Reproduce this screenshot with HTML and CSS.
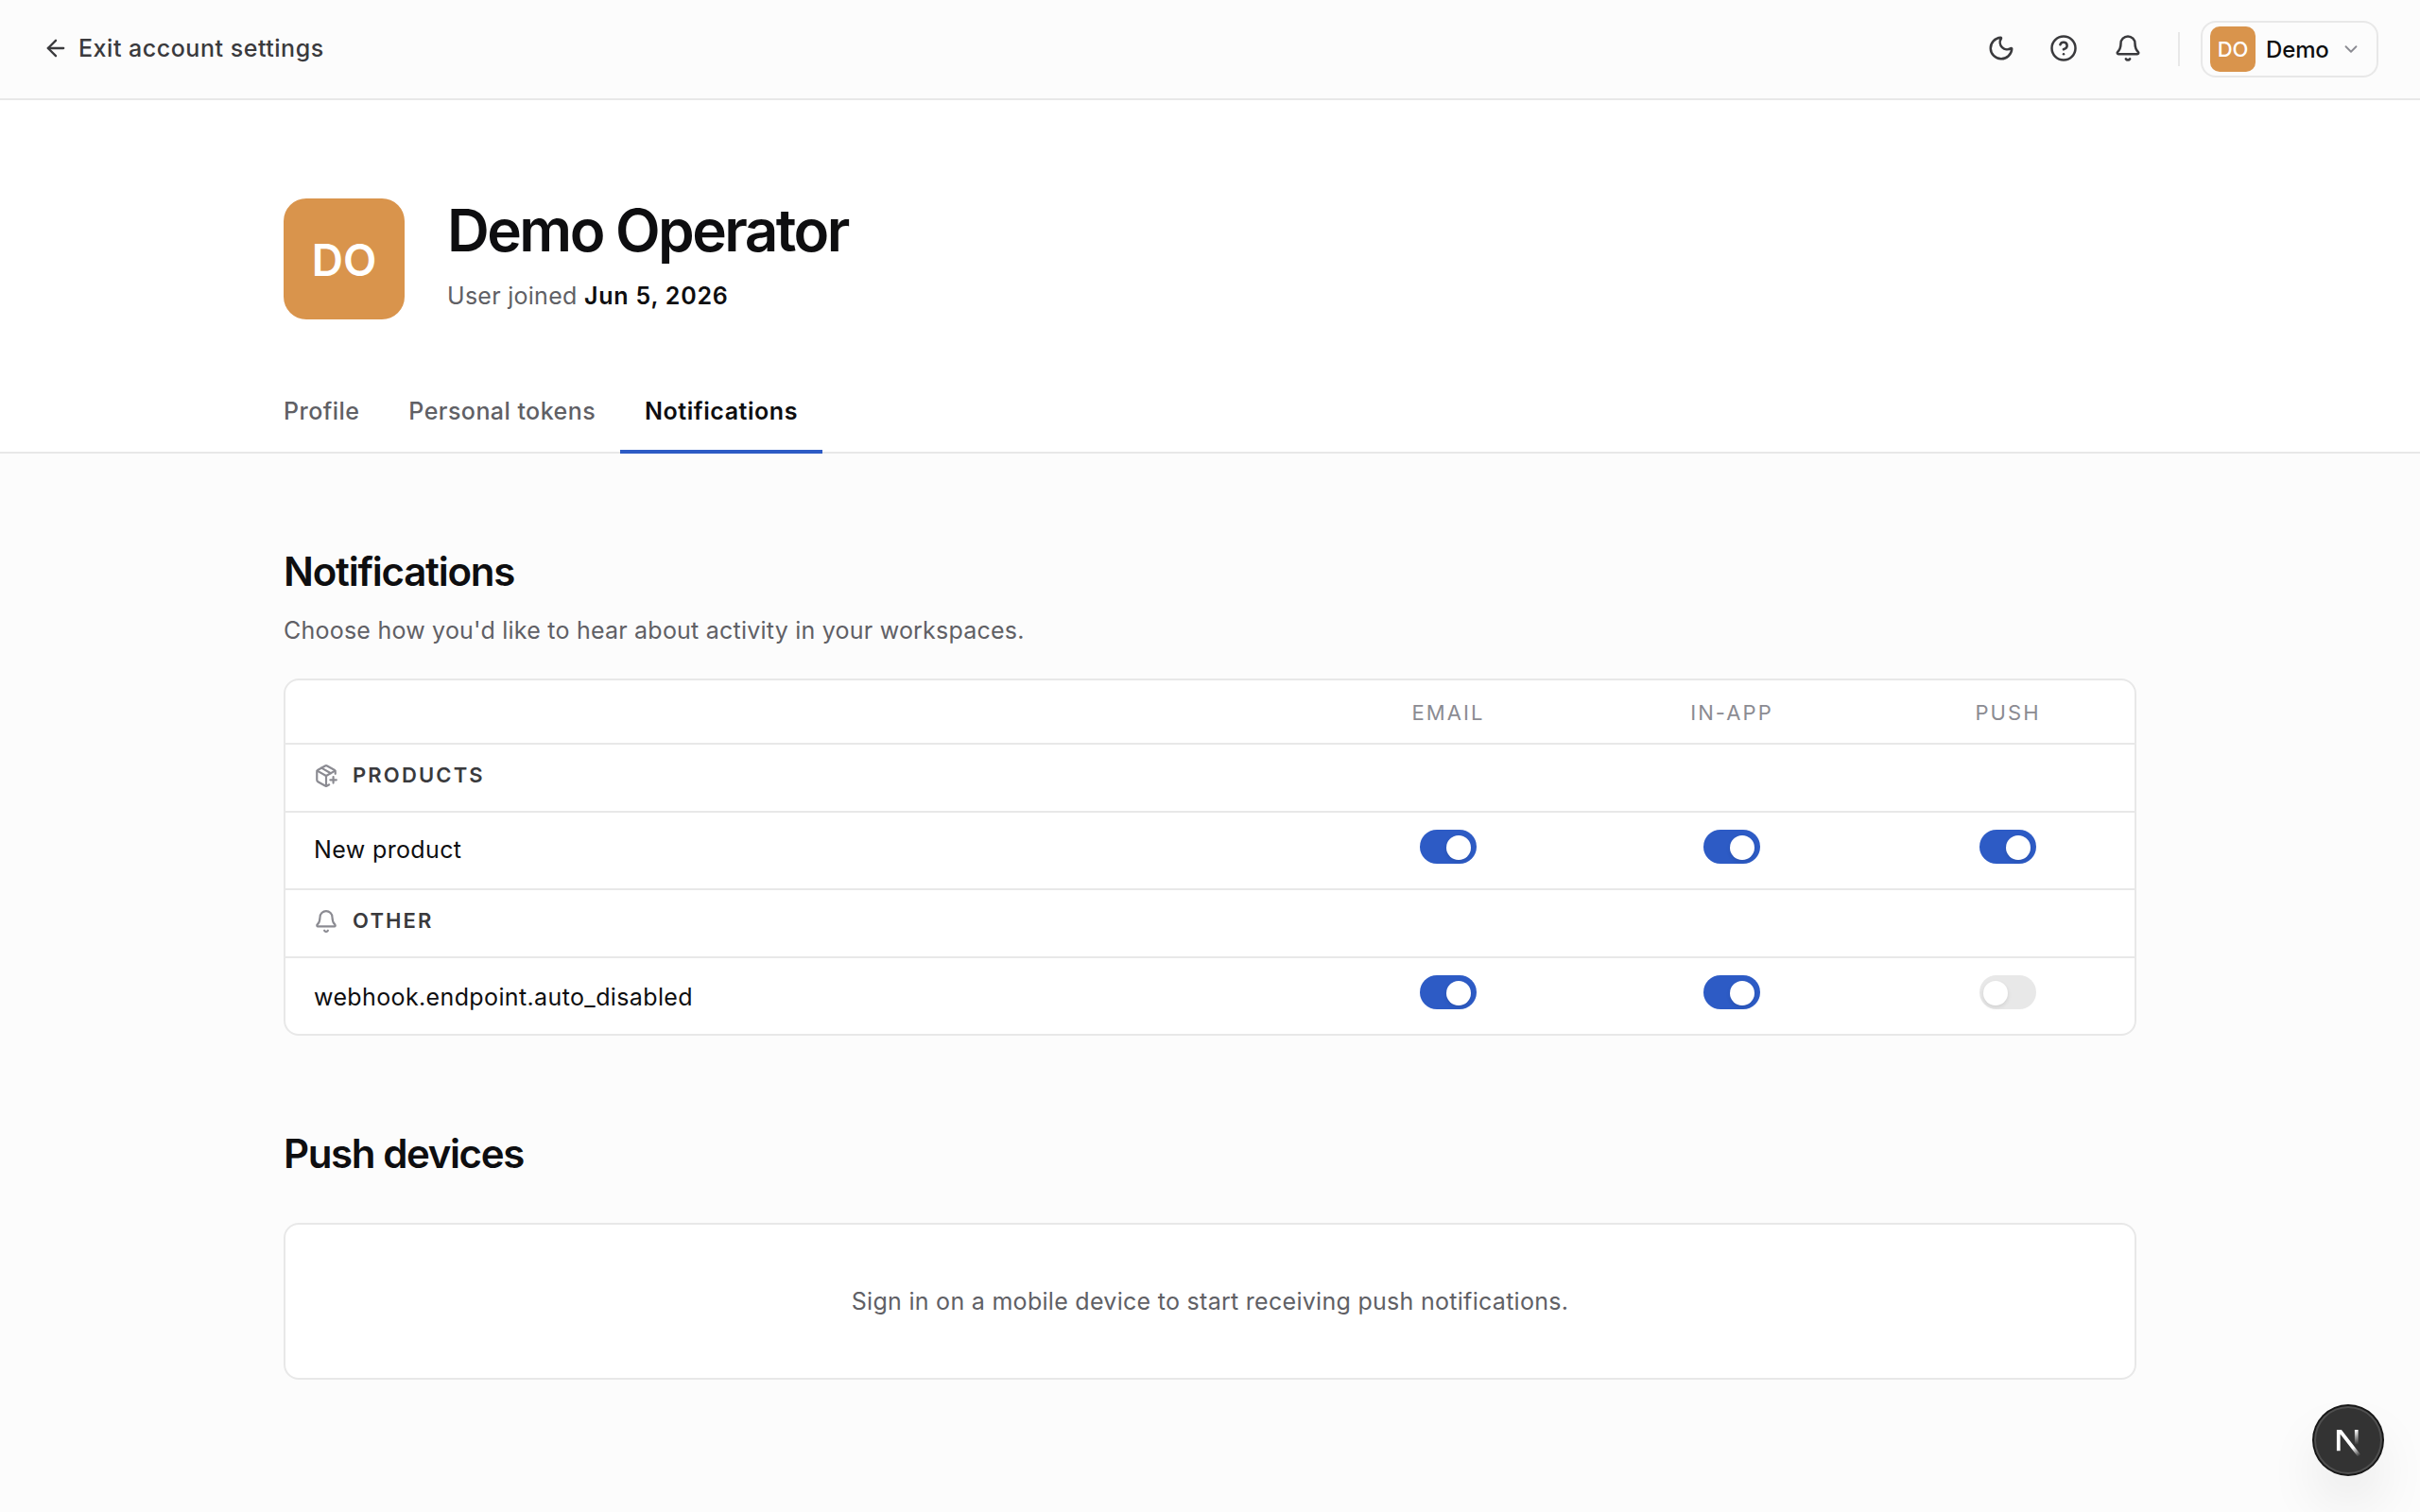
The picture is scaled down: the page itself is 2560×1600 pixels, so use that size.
FILE: index.html
```
<!DOCTYPE html>
<html lang="en">
<head>
  <meta charset="UTF-8">
  <meta name="viewport" content="width=device-width, initial-scale=1">
  <title>Notifications - Account settings</title>
  <link rel="stylesheet" href="styles.css">
</head>
<body>
  <header class="topbar">
    <a class="exit-link" href="#">
      <svg class="icon" width="28" height="28" viewBox="0 0 24 24"><path d="m12 19-7-7 7-7"/><path d="M19 12H5"/></svg>
      Exit account settings
    </a>
    <div class="topbar-right">
      <div class="topbar-icons">
        <svg class="icon" width="30" height="30" viewBox="0 0 24 24"><path d="M20.985 12.486a9 9 0 1 1-9.473-9.472c.405-.022.617.46.402.803a6 6 0 0 0 8.268 8.268c.344-.215.825-.004.803.401"/></svg>
        <svg class="icon" width="30" height="30" viewBox="0 0 24 24"><circle cx="12" cy="12" r="10"/><path d="M9.09 9a3 3 0 0 1 5.83 1c0 2-3 3-3 3"/><path d="M12 17h.01"/></svg>
        <svg class="icon icon-bell" width="30" height="30" viewBox="0 0 24 24"><path d="M10.268 21a2 2 0 0 0 3.464 0"/><path d="M3.262 15.326A1 1 0 0 0 4 17h16a1 1 0 0 0 .74-1.673C19.41 13.956 18 12.499 18 8A6 6 0 0 0 6 8c0 4.499-1.411 5.956-2.738 7.326"/></svg>
      </div>
      <span class="divider"></span>
      <button class="user-menu" type="button">
        <span class="avatar avatar-sm">DO</span>
        <span>Demo</span>
        <svg class="icon chevron" width="22" height="22" viewBox="0 0 24 24"><path d="m6 9 6 6 6-6"/></svg>
      </button>
    </div>
  </header>

  <section class="profile">
    <div class="container">
      <div class="profile-head">
        <span class="avatar avatar-lg">DO</span>
        <div>
          <h1>Demo Operator</h1>
          <p class="joined">User joined <strong>Jun 5, 2026</strong></p>
        </div>
      </div>
      <nav class="tabs">
        <a href="#">Profile</a>
        <a href="#">Personal tokens</a>
        <a href="#" class="active">Notifications</a>
      </nav>
    </div>
  </section>

  <main class="container">
    <h2>Notifications</h2>
    <p class="lead">Choose how you'd like to hear about activity in your workspaces.</p>

    <div class="card prefs">
      <div class="prefs-row prefs-head">
        <span></span>
        <span>EMAIL</span>
        <span>IN-APP</span>
        <span>PUSH</span>
      </div>
      <div class="prefs-group">
        <svg class="icon" width="26" height="26" viewBox="0 0 24 24"><path d="M16 16h6"/><path d="M19 13v6"/><path d="M21 10V8a2 2 0 0 0-1-1.73l-7-4a2 2 0 0 0-2 0l-7 4A2 2 0 0 0 3 8v8a2 2 0 0 0 1 1.73l7 4a2 2 0 0 0 2 0l2-1.14"/><path d="m7.5 4.27 9 5.15"/><path d="M3.29 7 12 12l8.71-5"/><path d="M12 22V12"/></svg>
        <span>PRODUCTS</span>
      </div>
      <div class="prefs-row">
        <span class="prefs-name">New product</span>
        <span class="prefs-cell"><button class="toggle on" role="switch" aria-checked="true" aria-label="Email"></button></span>
        <span class="prefs-cell"><button class="toggle on" role="switch" aria-checked="true" aria-label="In-app"></button></span>
        <span class="prefs-cell"><button class="toggle on" role="switch" aria-checked="true" aria-label="Push"></button></span>
      </div>
      <div class="prefs-group">
        <svg class="icon" width="26" height="26" viewBox="0 0 24 24"><path d="M10.268 21a2 2 0 0 0 3.464 0"/><path d="M3.262 15.326A1 1 0 0 0 4 17h16a1 1 0 0 0 .74-1.673C19.41 13.956 18 12.499 18 8A6 6 0 0 0 6 8c0 4.499-1.411 5.956-2.738 7.326"/></svg>
        <span>OTHER</span>
      </div>
      <div class="prefs-row">
        <span class="prefs-name prefs-key">webhook.endpoint.auto_disabled</span>
        <span class="prefs-cell"><button class="toggle on" role="switch" aria-checked="true" aria-label="Email"></button></span>
        <span class="prefs-cell"><button class="toggle on" role="switch" aria-checked="true" aria-label="In-app"></button></span>
        <span class="prefs-cell"><button class="toggle" role="switch" aria-checked="false" aria-label="Push"></button></span>
      </div>
    </div>

    <h2 class="devices-title">Push devices</h2>
    <div class="card empty">Sign in on a mobile device to start receiving push notifications.</div>
  </main>

  <button class="dev-button" type="button" aria-label="Open dev tools">
    <svg width="36" height="36" viewBox="6.95 11 18 18" fill="none">
      <defs>
        <linearGradient id="fade-diagonal" x1="9.95" y1="11.05" x2="13.3" y2="15.4" gradientUnits="userSpaceOnUse">
          <stop stop-color="#fff"/>
          <stop offset="1" stop-color="#fff" stop-opacity="0"/>
        </linearGradient>
        <linearGradient id="fade-stem" x1="11.82" y1="1.5" x2="11.77" y2="9.4" gradientUnits="userSpaceOnUse">
          <stop stop-color="#fff"/>
          <stop offset="1" stop-color="#fff" stop-opacity="0"/>
        </linearGradient>
        <clipPath id="mark-clip"><rect x="0" y="1.5" width="16" height="14"/></clipPath>
      </defs>
      <g transform="translate(8.5 13)" stroke-width="1.86" clip-path="url(#mark-clip)">
        <path d="M13.3 15.2 2.34 1v11.6" stroke="url(#fade-diagonal)"/>
        <path d="M11.825 1.5v11.6" stroke="url(#fade-stem)"/>
      </g>
    </svg>
  </button>
</body>
</html>
```
FILE: styles.css
```
* {
  box-sizing: border-box;
}
body {
  margin: 0;
  background: #fcfcfc;
  color: #0e0e10;
  font-family: Inter, "Liberation Sans", sans-serif;
  font-size: 25px;
  line-height: 40px;
  letter-spacing: 0.015em;
}
h1, h2, p {
  margin: 0;
}
a {
  color: inherit;
  text-decoration: none;
}
button {
  padding: 0;
  border: none;
  font-family: inherit;
  color: inherit;
  cursor: pointer;
}
.icon {
  display: block;
  flex-shrink: 0;
  fill: none;
  stroke: currentColor;
  stroke-width: 2;
  stroke-linecap: round;
  stroke-linejoin: round;
}
.container {
  width: 1960px;
  margin: 0 auto;
}

/* top bar */
.topbar {
  display: flex;
  align-items: center;
  justify-content: space-between;
  height: 106px;
  padding: 0 44px 0 45px;
  border-bottom: 2px solid #e8e8e8;
  color: #3a3a3d;
}
.exit-link {
  display: flex;
  align-items: center;
  gap: 10px;
  padding-bottom: 2px;
  font-weight: 500;
  letter-spacing: 0.021em;
}
.topbar-right {
  display: flex;
  align-items: center;
}
.topbar-icons {
  display: flex;
  gap: 36px;
  padding-bottom: 2px;
}
.icon-bell {
  margin-left: 2px;
}
.divider {
  width: 2px;
  height: 36px;
  margin: 0 22px 0 38px;
  background: #e8e8e8;
}
.user-menu {
  display: flex;
  align-items: center;
  gap: 11px;
  width: 188px;
  height: 60px;
  padding: 0 16px 0 8px;
  border: 2px solid #e8e8e8;
  border-radius: 16px;
  background: none;
  color: #0e0e10;
  font-size: 24px;
  font-weight: 500;
  letter-spacing: -0.005em;
}
.chevron {
  margin-left: auto;
  color: #8b8b92;
}
.avatar {
  display: flex;
  align-items: center;
  justify-content: center;
  flex-shrink: 0;
  background: #d9944c;
  color: #fff;
  font-weight: 600;
  letter-spacing: 0;
}
.avatar-sm {
  width: 48px;
  height: 48px;
  border-radius: 10px;
  font-size: 22px;
  font-weight: 500;
}
.avatar-lg {
  width: 128px;
  height: 128px;
  padding-top: 2px;
  border-radius: 24px;
  font-size: 46px;
}

/* profile */
.profile {
  padding-top: 104px;
  border-bottom: 2px solid #e8e8e8;
  background: #fff;
}
.profile-head {
  display: flex;
  gap: 45px;
}
h1 {
  font-size: 62px;
  font-weight: 600;
  line-height: 68px;
  letter-spacing: -0.041em;
}
.joined {
  margin-top: 15px;
  color: #606065;
  letter-spacing: 0.011em;
}
.joined strong {
  color: #0e0e10;
  font-weight: 600;
  letter-spacing: 0.032em;
}
.tabs {
  display: flex;
  margin: 52px 0 -2px -26px;
}
.tabs a {
  padding: 27px 26px 23px;
  border-bottom: 4px solid transparent;
  color: #606065;
  font-weight: 500;
  line-height: 36px;
  letter-spacing: 0.018em;
}
.tabs .active {
  border-color: #2d5bc5;
  color: #0e0e10;
  font-weight: 600;
  letter-spacing: 0.022em;
}

/* notification settings */
main {
  padding-top: 100px;
}
h2 {
  font-size: 42px;
  font-weight: 600;
  line-height: 50px;
  letter-spacing: -0.029em;
}
.lead {
  margin: 17px 0 31px;
  color: #606065;
  letter-spacing: 0.009em;
}
.card {
  border: 2px solid #e8e8e8;
  border-radius: 16px;
  background: #fff;
}
.prefs > * + * {
  border-top: 2px solid #e8e8e8;
}
.prefs-row {
  display: grid;
  grid-template-columns: 1fr 284px 316px 268px;
  align-items: center;
  height: 82px;
}
.prefs-head {
  height: 66px;
  padding-top: 2px;
  color: #8b8b92;
  font-size: 22px;
  letter-spacing: 0.095em;
  text-align: center;
}
.prefs-group {
  display: flex;
  align-items: center;
  gap: 15px;
  height: 72px;
  padding: 0 30px 6px;
  color: #3a3a3d;
  font-size: 22px;
  font-weight: 600;
  letter-spacing: 0.098em;
}
.prefs-group .icon {
  margin-top: 2px;
  color: #8b8b92;
}
.prefs-name {
  padding: 0 0 2px 30px;
}
.prefs-key {
  padding-top: 2px;
  padding-bottom: 0;
}
.prefs-cell {
  display: flex;
  justify-content: center;
  padding-bottom: 8px;
}
.toggle {
  width: 60px;
  height: 36px;
  padding: 6px 4px 4px;
  border-radius: 18px;
  background: #e8e8e8;
}
.toggle::before {
  content: "";
  display: block;
  width: 26px;
  height: 26px;
  border-radius: 50%;
  background: #fff;
  box-shadow: 0 2px 4px rgba(0, 0, 0, 0.1);
}
.toggle.on {
  background: #2d5bc5;
}
.toggle.on::before {
  margin-left: 24px;
}

/* push devices */
.devices-title {
  margin: 100px 0 48px;
  letter-spacing: -0.033em;
}
.empty {
  height: 166px;
  padding: 61px 0;
  color: #606065;
  letter-spacing: 0.0115em;
  text-align: center;
}

.dev-button {
  position: fixed;
  right: 40px;
  bottom: 40px;
  display: flex;
  align-items: center;
  justify-content: center;
  width: 72px;
  height: 72px;
  border-radius: 50%;
  background: #333;
  box-shadow: 0 0 0 2px #171717, inset 0 0 0 2px rgba(255, 255, 255, 0.14), 0 32px 64px -16px rgba(0, 0, 0, 0.24);
}
```
